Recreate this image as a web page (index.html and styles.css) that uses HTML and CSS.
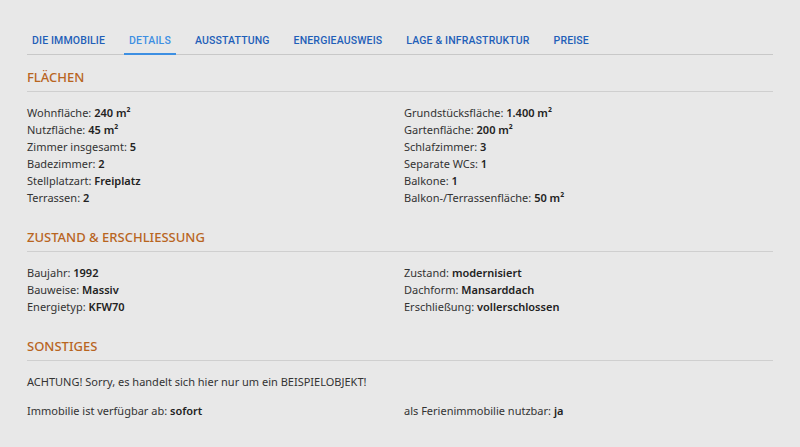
FILE: index.html
```html
<!DOCTYPE html>
<html lang="de">
<head>
<meta charset="utf-8">
<link rel="stylesheet" href="styles.css">
</head>
<body>
<div class="page">
  <nav class="tabs">
    <a class="tab">DIE IMMOBILIE</a>
    <a class="tab active">DETAILS</a>
    <a class="tab">AUSSTATTUNG</a>
    <a class="tab">ENERGIEAUSWEIS</a>
    <a class="tab">LAGE &amp; INFRASTRUKTUR</a>
    <a class="tab">PREISE</a>
  </nav>

  <section class="block first">
    <h2 class="heading">FLÄCHEN</h2>
    <div class="grid">
      <div class="col">
        <div class="row">Wohnfläche: <b>240 m²</b></div>
        <div class="row">Nutzfläche: <b>45 m²</b></div>
        <div class="row">Zimmer insgesamt: <b>5</b></div>
        <div class="row">Badezimmer: <b>2</b></div>
        <div class="row">Stellplatzart: <b>Freiplatz</b></div>
        <div class="row">Terrassen: <b>2</b></div>
      </div>
      <div class="col">
        <div class="row">Grundstücksfläche: <b>1.400 m²</b></div>
        <div class="row">Gartenfläche: <b>200 m²</b></div>
        <div class="row">Schlafzimmer: <b>3</b></div>
        <div class="row">Separate WCs: <b>1</b></div>
        <div class="row">Balkone: <b>1</b></div>
        <div class="row">Balkon-/Terrassenfläche: <b>50 m²</b></div>
      </div>
    </div>
  </section>

  <section class="block">
    <h2 class="heading">ZUSTAND &amp; ERSCHLIESSUNG</h2>
    <div class="grid">
      <div class="col">
        <div class="row">Baujahr: <b>1992</b></div>
        <div class="row">Bauweise: <b>Massiv</b></div>
        <div class="row">Energietyp: <b>KFW70</b></div>
      </div>
      <div class="col">
        <div class="row">Zustand: <b>modernisiert</b></div>
        <div class="row">Dachform: <b>Mansarddach</b></div>
        <div class="row">Erschließung: <b>vollerschlossen</b></div>
      </div>
    </div>
  </section>

  <section class="block">
    <h2 class="heading">SONSTIGES</h2>
    <p class="note">ACHTUNG! Sorry, es handelt sich hier nur um ein BEISPIELOBJEKT!</p>
    <div class="grid">
      <div class="col">
        <div class="row">Immobilie ist verfügbar ab: <b>sofort</b></div>
      </div>
      <div class="col">
        <div class="row">als Ferienimmobilie nutzbar: <b>ja</b></div>
      </div>
    </div>
  </section>
</div>
</body>
</html>
```

FILE: styles.css
```css
html, body {
  margin: 0;
  background: #e8e8e8;
}
body {
  font-family: "Noto Sans", "Open Sans", sans-serif;
  color: #333;
  font-size: 11px;
}
.page {
  padding: 32px 27px 0 27px;
}
.tabs {
  display: flex;
  gap: 14px;
  border-bottom: 1px solid #c8c8c8;
}
.tab {
  display: block;
  padding: 2px 5px 6px 5px;
  font-family: Roboto, "Noto Sans", sans-serif;
  font-size: 10.5px;
  font-weight: 500;
  letter-spacing: 0.15px;
  color: #1f5fb8;
  border-bottom: 2px solid transparent;
  margin-bottom: -1px;
}
.tab.active {
  color: #3d8fe2;
  border-bottom-color: #3d8fe2;
}
.block {
  margin-top: 22px;
}
.block.first {
  margin-top: 13px;
}
.heading {
  margin: 0 0 12px 0;
  padding-bottom: 5px;
  border-bottom: 1px solid #cfcfcf;
  font-size: 13px;
  font-weight: 500;
  color: #b8651f;
}
.grid {
  display: grid;
  grid-template-columns: 1fr 1fr;
  column-gap: 8px;
}
.row {
  line-height: 17px;
}
.row b {
  font-weight: 600;
  color: #222;
}
.note {
  margin: 0 0 12px 0;
  line-height: 17px;
}
```
